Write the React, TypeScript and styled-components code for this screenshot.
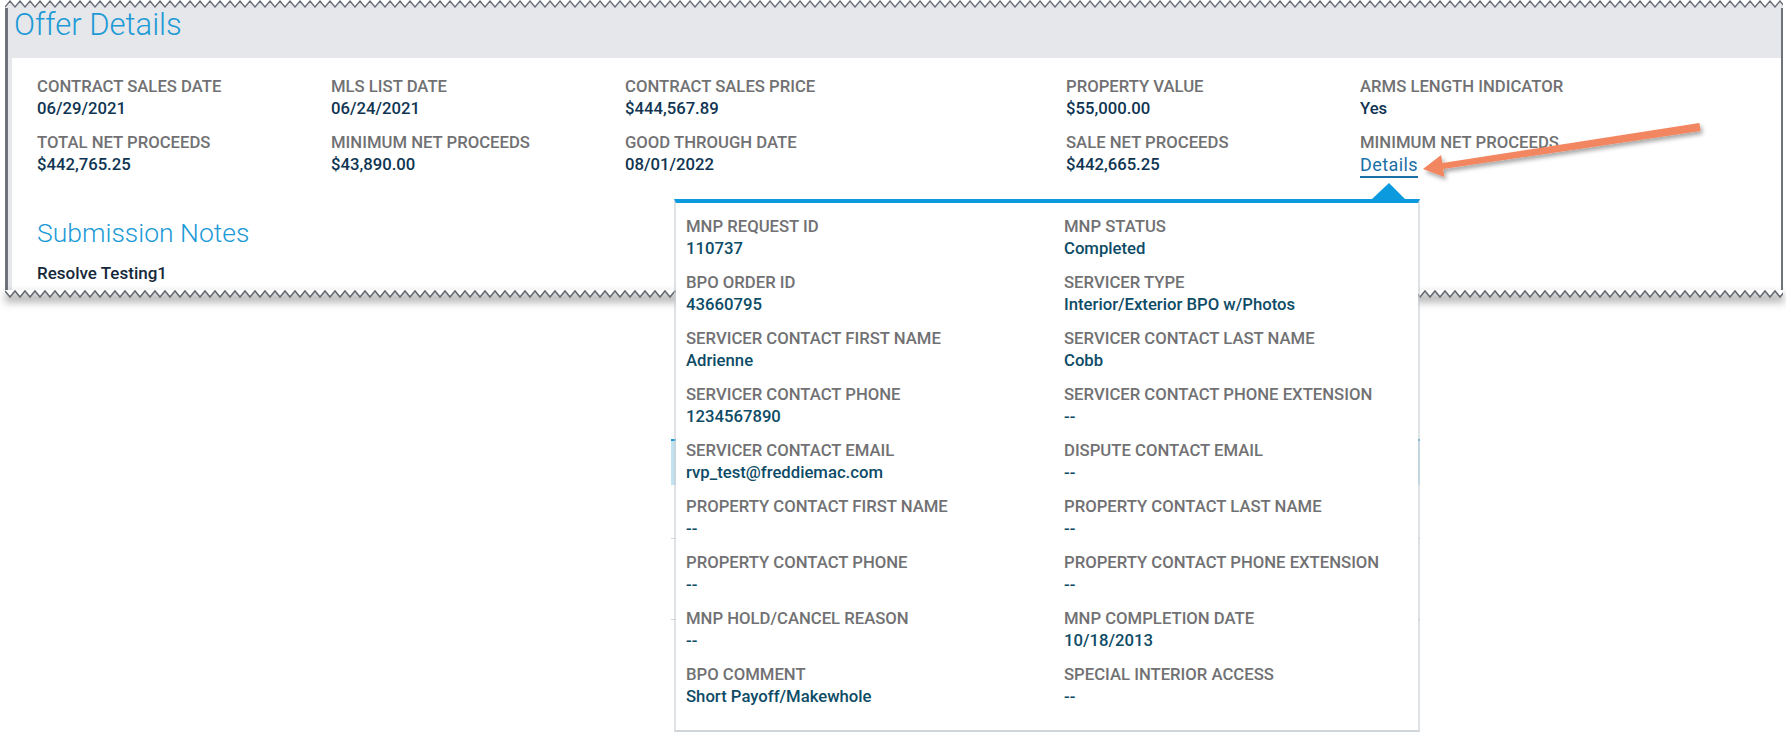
import React from "react"
import styled, { createGlobalStyle } from "styled-components"

const GlobalStyle = createGlobalStyle`
  html, body {
    margin: 0;
    padding: 0;
    background: #ffffff;
  }
  body {
    font-family: Roboto, "Noto Sans", "Liberation Sans", sans-serif;
  }
`

const CARD_WIDTH = 1778

const Page = styled.div`
  position: relative;
  width: 1786px;
  height: 734px;
  overflow: hidden;
  background: #ffffff;
`

const Card = styled.section`
  width: ${CARD_WIDTH}px;
  margin-left: 5px;
`

const Edge = styled.svg<{ $shadow?: boolean }>`
  display: block;
  ${({ $shadow }) => $shadow && `filter: drop-shadow(0 5px 4px rgba(0, 0, 0, 0.5));`}
`

const CardBody = styled.div`
  background: #e6e7eb;
  border-left: 3px solid #6f747c;
  border-right: 2px solid #6f747c;
`

const Header = styled.header`
  height: 50px;
  padding-left: 6px;
`

const Title = styled.h1`
  margin: 0;
  font-size: 31px;
  line-height: 34px;
  font-weight: 300;
  color: #1c9ad6;
`

const Panel = styled.div`
  margin-left: 4px;
  background: #ffffff;
  padding: 18px 0 6px 25px;
`

const FieldGrid = styled.div<{ $columns: string }>`
  display: grid;
  grid-template-columns: ${({ $columns }) => $columns};
  row-gap: 12px;
`

const Label = styled.div`
  font-size: 16.7px;
  line-height: 22px;
  font-weight: 500;
  color: #717173;
  white-space: nowrap;
`

const Value = styled.div<{ $popup?: boolean }>`
  font-size: 16.7px;
  line-height: 22px;
  font-weight: 500;
  color: ${({ $popup }) => ($popup ? "#0d4b66" : "#0e3451")};
  white-space: nowrap;
`

const DetailsLink = styled.a`
  display: inline-block;
  font-size: 18px;
  line-height: 22px;
  letter-spacing: 0.4px;
  color: #1a6fa7;
  text-decoration: none;
  border-bottom: 2px solid #1a6fa7;
  cursor: pointer;
`

const SectionTitle = styled.h2`
  margin: 40px 0 0;
  font-size: 26.5px;
  line-height: 30px;
  font-weight: 300;
  color: #1c9ad6;
`

const Note = styled.p`
  margin: 14px 0 0;
  font-size: 17px;
  line-height: 22px;
  font-weight: 500;
  color: #15283a;
`

/* page content that sits under the popover; only its edges show */
const Backdrop = styled.div`
  width: 749px;
  margin: 140px 0 0 671px;
`

const TabStrip = styled.div`
  height: 44px;
  background: #c3e2ef;
  border-top: 2px solid #1a9ad6;
`

const BackdropRow = styled.div<{ $height: number }>`
  height: ${({ $height }) => $height}px;
  border-bottom: 1px solid #d3d7db;
`

const Popover = styled.div`
  position: absolute;
  left: 674px;
  top: 199px;
  width: 746px;
  box-sizing: border-box;
  background: #ffffff;
  background-clip: padding-box;
  border-top: 4px solid #0b9ade;
  border-left: 2px solid rgba(200, 206, 211, 0.6);
  border-right: 2px solid rgba(200, 206, 211, 0.6);
  border-bottom: 2px solid #cfd5d9;
  padding: 13px 10px 22px;

  &::before {
    content: "";
    position: absolute;
    top: -20px;
    right: 13px;
    border-left: 17px solid transparent;
    border-right: 16px solid transparent;
    border-bottom: 16px solid #0b9ade;
  }
`

const Callout = styled.svg`
  position: absolute;
  left: 1400px;
  top: 100px;
  overflow: visible;
`

type Field = { label: string; value: string }

const offerFields: Field[] = [
  { label: "CONTRACT SALES DATE", value: "06/29/2021" },
  { label: "MLS LIST DATE", value: "06/24/2021" },
  { label: "CONTRACT SALES PRICE", value: "$444,567.89" },
  { label: "PROPERTY VALUE", value: "$55,000.00" },
  { label: "ARMS LENGTH INDICATOR", value: "Yes" },
  { label: "TOTAL NET PROCEEDS", value: "$442,765.25" },
  { label: "MINIMUM NET PROCEEDS", value: "$43,890.00" },
  { label: "GOOD THROUGH DATE", value: "08/01/2022" },
  { label: "SALE NET PROCEEDS", value: "$442,665.25" },
]

const mnpFields: Field[] = [
  { label: "MNP REQUEST ID", value: "110737" },
  { label: "MNP STATUS", value: "Completed" },
  { label: "BPO ORDER ID", value: "43660795" },
  { label: "SERVICER TYPE", value: "Interior/Exterior BPO w/Photos" },
  { label: "SERVICER CONTACT FIRST NAME", value: "Adrienne" },
  { label: "SERVICER CONTACT LAST NAME", value: "Cobb" },
  { label: "SERVICER CONTACT PHONE", value: "1234567890" },
  { label: "SERVICER CONTACT PHONE EXTENSION", value: "--" },
  { label: "SERVICER CONTACT EMAIL", value: "rvp_test@freddiemac.com" },
  { label: "DISPUTE CONTACT EMAIL", value: "--" },
  { label: "PROPERTY CONTACT FIRST NAME", value: "--" },
  { label: "PROPERTY CONTACT LAST NAME", value: "--" },
  { label: "PROPERTY CONTACT PHONE", value: "--" },
  { label: "PROPERTY CONTACT PHONE EXTENSION", value: "--" },
  { label: "MNP HOLD/CANCEL REASON", value: "--" },
  { label: "MNP COMPLETION DATE", value: "10/18/2013" },
  { label: "BPO COMMENT", value: "Short Payoff/Makewhole" },
  { label: "SPECIAL INTERIOR ACCESS", value: "--" },
]

// zigzag points for the torn paper edges
function zigzag(width: number, period: number, high: number, low: number) {
  const pts: string[] = [`0 ${low}`]
  let up = true
  for (let x = period / 2; x <= width + period; x += period / 2) {
    pts.push(`${x} ${up ? high : low}`)
    up = !up
  }
  return pts
}

function TornTop() {
  const line = "M" + zigzag(CARD_WIDTH, 10, 1, 7).join(" L")
  return (
    <Edge width={CARD_WIDTH} height={8} viewBox={`0 0 ${CARD_WIDTH} 8`}>
      <path d={`${line} L${CARD_WIDTH} 8 L0 8 Z`} fill="#e6e7eb" />
      <path d={line} fill="none" stroke="#6b7078" strokeWidth={1.4} />
    </Edge>
  )
}

function TornBottom() {
  const line = "M" + zigzag(CARD_WIDTH, 10, 7, 1).join(" L")
  return (
    <Edge $shadow width={CARD_WIDTH} height={9} viewBox={`0 0 ${CARD_WIDTH} 9`}>
      <path d={`${line} L${CARD_WIDTH} 0 L0 0 Z`} fill="#ffffff" />
      <path d={line} fill="none" stroke="#656a72" strokeWidth={1.6} />
    </Edge>
  )
}

function FieldItem({ field, popup }: { field: Field; popup?: boolean }) {
  return (
    <div>
      <Label>{field.label}</Label>
      <Value $popup={popup}>{field.value}</Value>
    </div>
  )
}

export default function App() {
  return (
    <Page>
      <GlobalStyle />
      <Card>
        <TornTop />
        <CardBody>
          <Header>
            <Title>Offer Details</Title>
          </Header>
          <Panel>
            <FieldGrid $columns="294px 294px 441px 294px 1fr">
              {offerFields.map((f, i) => (
                <FieldItem key={i} field={f} />
              ))}
              <div>
                <Label>MINIMUM NET PROCEEDS</Label>
                <DetailsLink>Details</DetailsLink>
              </div>
            </FieldGrid>
            <SectionTitle>Submission Notes</SectionTitle>
            <Note>Resolve Testing1</Note>
          </Panel>
        </CardBody>
        <TornBottom />
      </Card>

      <Backdrop>
        <TabStrip />
        <BackdropRow $height={53} />
        <BackdropRow $height={80} />
      </Backdrop>

      <Popover>
        <FieldGrid $columns="378px 1fr">
          {mnpFields.map((f, i) => (
            <FieldItem key={i} field={f} popup />
          ))}
        </FieldGrid>
      </Popover>

      <Callout width={320} height={100} viewBox="0 0 320 100">
        <defs>
          <filter id="arrowShadow" x="-10%" y="-50%" width="130%" height="200%">
            <feDropShadow dx="2" dy="3" stdDeviation="2" floodColor="#000" floodOpacity="0.35" />
          </filter>
        </defs>
        <polygon
          points="23,69 41.1,55.1 42.4,63 299.4,23 300.6,31 43.2,69 44.4,76.9"
          fill="#f28660"
          filter="url(#arrowShadow)"
        />
      </Callout>
    </Page>
  )
}
